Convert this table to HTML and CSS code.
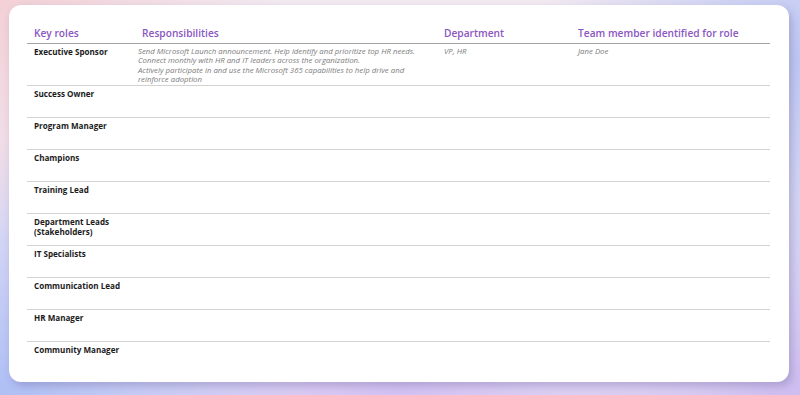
FILE: index.html
```html
<!DOCTYPE html>
<html lang="en">
<head>
<meta charset="utf-8">
<title>Key roles</title>
<link rel="stylesheet" href="styles.css">
</head>
<body>
<div class="card">
  <div class="table">
    <div class="row head">
      <div class="cell">Key roles</div>
      <div class="cell">Responsibilities</div>
      <div class="cell">Department</div>
      <div class="cell">Team member identified for role</div>
    </div>
    <div class="row first">
      <div class="cell role">Executive Sponsor</div>
      <div class="cell note wide">Send Microsoft Launch announcement. Help identify and prioritize top HR needs.<br>Connect monthly with HR and IT leaders across the organization.<br>Actively participate in and use the Microsoft 365 capabilities to help drive and reinforce adoption</div>
      <div class="cell note">VP, HR</div>
      <div class="cell note">Jane Doe</div>
    </div>
    <div class="row"><div class="cell role">Success Owner</div><div class="cell"></div><div class="cell"></div><div class="cell"></div></div>
    <div class="row"><div class="cell role">Program Manager</div><div class="cell"></div><div class="cell"></div><div class="cell"></div></div>
    <div class="row"><div class="cell role">Champions</div><div class="cell"></div><div class="cell"></div><div class="cell"></div></div>
    <div class="row"><div class="cell role">Training Lead</div><div class="cell"></div><div class="cell"></div><div class="cell"></div></div>
    <div class="row"><div class="cell role">Department Leads<br>(Stakeholders)</div><div class="cell"></div><div class="cell"></div><div class="cell"></div></div>
    <div class="row"><div class="cell role">IT Specialists</div><div class="cell"></div><div class="cell"></div><div class="cell"></div></div>
    <div class="row"><div class="cell role">Communication Lead</div><div class="cell"></div><div class="cell"></div><div class="cell"></div></div>
    <div class="row"><div class="cell role">HR Manager</div><div class="cell"></div><div class="cell"></div><div class="cell"></div></div>
    <div class="row last"><div class="cell role">Community Manager</div><div class="cell"></div><div class="cell"></div><div class="cell"></div></div>
  </div>
</div>
</body>
</html>
```
FILE: styles.css
```css
html, body {
  margin: 0;
  height: 100%;
}
body {
  width: 800px;
  height: 395px;
  box-sizing: border-box;
  padding: 5px 11px 13px 9px;
  font-family: "Open Sans", "Noto Sans", sans-serif;
  background:
    radial-gradient(ellipse 280px 240px at 0% 0%, #f3d0d6 0%, rgba(243,208,214,0) 100%),
    radial-gradient(ellipse 300px 260px at 0% 100%, #aebff5 0%, rgba(174,191,245,0) 100%),
    radial-gradient(ellipse 320px 200px at 50% 100%, #d3c2f3 0%, rgba(211,194,243,0) 100%),
    radial-gradient(ellipse 260px 300px at 100% 15%, #bfc9f4 0%, rgba(191,201,244,0) 100%),
    radial-gradient(ellipse 260px 200px at 100% 100%, #cdbdf0 0%, rgba(205,189,240,0) 100%),
    linear-gradient(180deg, #f3eaf1 0%, #e6dff6 100%);
  overflow: hidden;
}
.card {
  box-sizing: border-box;
  width: 780px;
  height: 377px;
  background: #ffffff;
  border-radius: 12px;
  box-shadow: 3px 4px 8px rgba(90, 80, 140, 0.3);
  padding: 0 19px 0 18px;
}
.row {
  display: grid;
  grid-template-columns: 108px 302px 134px 1fr;
  height: 32px;
  box-sizing: border-box;
  border-bottom: 1px solid #d2d2d2;
}
.row.head {
  height: 39px;
  border-bottom: 1.5px solid #a4a4a4;
  align-items: end;
  padding-bottom: 3px;
}
.row.first { height: 42px; }
.row.last { border-bottom: none; }
.cell {
  padding-left: 7px;
}
.head .cell {
  color: #8a56c2;
  font-weight: 600;
  font-size: 10.2px;
  line-height: 14px;
}
.role {
  font-size: 8.1px;
  font-weight: 700;
  color: #1b1b1b;
  line-height: 10px;
  padding-top: 2.5px;
}
.first .role {
  padding-top: 3px;
}
.note {
  font-style: italic;
  font-size: 7.8px;
  color: #7c7c7c;
  line-height: 9.4px;
  padding-top: 3px;
}
.note.wide {
  padding-left: 3px;
  padding-right: 12px;
}
```
